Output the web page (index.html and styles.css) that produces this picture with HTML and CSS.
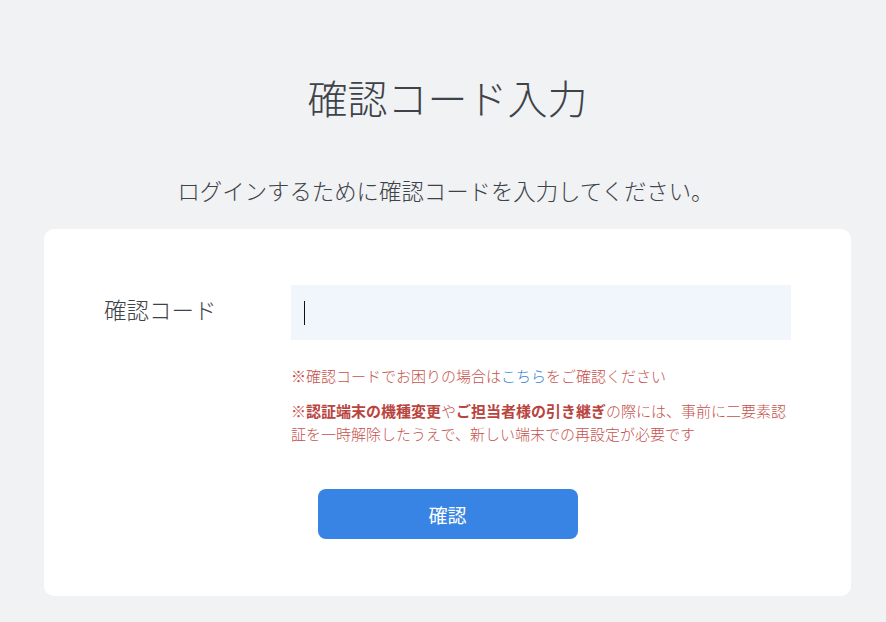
FILE: index.html
```html
<!DOCTYPE html>
<html lang="ja">
<head>
    <meta charset="UTF-8">
    <title>確認コード入力</title>
    <link rel="stylesheet" href="styles.css">
</head>
<body>
    <div class="page">
        <h1 class="title">確認コード入力</h1>
        <p class="lead">ログインするために確認コードを入力してください。</p>

        <div class="card">
            <div class="form-row">
                <label class="form-label" for="code">確認コード</label>
                <div class="form-field">
                    <div class="code-input">
                        <span class="caret"></span>
                    </div>
                    <p class="note">※確認コードでお困りの場合は<a href="#" class="link">こちら</a>をご確認ください</p>
                    <p class="note">※<b>認証端末の機種変更</b>や<b>ご担当者様の引き継ぎ</b>の際には、事前に二要素認証を一時解除したうえで、新しい端末での再設定が必要です</p>
                </div>
            </div>
            <div class="actions">
                <button class="submit">確認</button>
            </div>
        </div>
    </div>
</body>
</html>
```

FILE: styles.css
```css
body {
    margin: 0;
    background: #f0f2f4;
    color: #3e4249;
    font-family: "Noto Sans CJK JP", "Noto Sans", sans-serif;
}

.page {
    padding: 67px 35px 27px 44px;
}

.title {
    margin: 0;
    font-size: 40px;
    font-weight: 300;
    line-height: 60px;
    text-align: center;
}

.lead {
    margin: 47px 0 22px;
    font-size: 22.4px;
    font-weight: 300;
    line-height: 33px;
    text-align: center;
    padding-right: 4px;
}

.card {
    width: 807px;
    box-sizing: border-box;
    background: #fff;
    border-radius: 10px;
    padding: 56px 60px 57px;
}

.form-row {
    display: flex;
}

.form-label {
    width: 187px;
    flex-shrink: 0;
    font-size: 22.5px;
    font-weight: 300;
    line-height: 48px;
}

.form-field {
    flex: 1;
}

.code-input {
    height: 55px;
    background: #f1f5fc;
    display: flex;
    align-items: center;
    padding-left: 13px;
}

.caret {
    width: 1px;
    height: 24px;
    background: #111;
}

.note {
    margin: 12px 0 0;
    font-size: 15px;
    line-height: 23px;
    color: #c4524c;
    font-weight: 300;
}

.code-input + .note {
    margin-top: 24px;
}

.note b {
    font-weight: 700;
    color: #b9443e;
}

.link {
    color: #3a7fd6;
    text-decoration: none;
}

.actions {
    display: flex;
    justify-content: center;
    margin-top: 44px;
}

.submit {
    width: 260px;
    height: 50px;
    border: none;
    border-radius: 8px;
    background: #3884e4;
    color: #fff;
    font-family: inherit;
    font-size: 19px;
    cursor: pointer;
}
```
